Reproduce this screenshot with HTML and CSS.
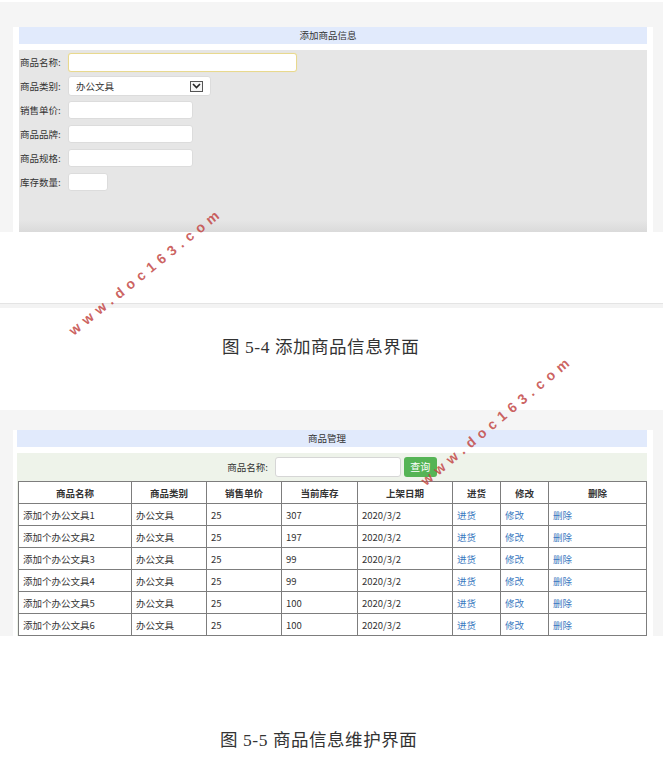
FILE: index.html
```html
<!DOCTYPE html>
<html lang="zh">
<head>
<meta charset="utf-8">
<title>商品信息</title>
<link rel="stylesheet" href="styles.css">
</head>
<body>
<section class="shot shot-add">
  <div class="panel panel-add">
    <div class="panel-title">添加商品信息</div>
    <div class="form-area">
      <div class="row"><span class="label">商品名称:</span><span class="input w-name focus"></span></div>
      <div class="row"><span class="label">商品类别:</span>
        <span class="select"><span class="select-text">办公文具</span>
          <span class="select-btn"><svg width="9" height="6" viewBox="0 0 9 6"><path d="M1 1 L4.5 4.5 L8 1" fill="none" stroke="#222" stroke-width="1.6"/></svg></span>
        </span>
      </div>
      <div class="row"><span class="label">销售单价:</span><span class="input w-mid"></span></div>
      <div class="row"><span class="label">商品品牌:</span><span class="input w-mid"></span></div>
      <div class="row"><span class="label">商品规格:</span><span class="input w-mid"></span></div>
      <div class="row"><span class="label">库存数量:</span><span class="input w-small"></span></div>
    </div>
  </div>
</section>
<div class="strip"></div>
<p class="caption cap1">图 5-4 添加商品信息界面</p>

<section class="shot shot-list">
  <div class="panel panel-list">
    <div class="panel-title">商品管理</div>
    <div class="search-area">
      <div class="search">
        <span class="search-label">商品名称:</span>
        <span class="search-input"></span>
        <span class="btn">查询</span>
      </div>
      <table class="grid">
        <colgroup>
          <col class="c1"><col class="c2"><col class="c3"><col class="c4"><col class="c5"><col class="c6"><col class="c7"><col class="c8">
        </colgroup>
        <thead>
          <tr><th>商品名称</th><th>商品类别</th><th>销售单价</th><th>当前库存</th><th>上架日期</th><th>进货</th><th>修改</th><th>删除</th></tr>
        </thead>
        <tbody>
          <tr><td>添加个办公文具1</td><td>办公文具</td><td>25</td><td>307</td><td>2020/3/2</td><td><a>进货</a></td><td><a>修改</a></td><td><a>删除</a></td></tr>
          <tr><td>添加个办公文具2</td><td>办公文具</td><td>25</td><td>197</td><td>2020/3/2</td><td><a>进货</a></td><td><a>修改</a></td><td><a>删除</a></td></tr>
          <tr><td>添加个办公文具3</td><td>办公文具</td><td>25</td><td>99</td><td>2020/3/2</td><td><a>进货</a></td><td><a>修改</a></td><td><a>删除</a></td></tr>
          <tr><td>添加个办公文具4</td><td>办公文具</td><td>25</td><td>99</td><td>2020/3/2</td><td><a>进货</a></td><td><a>修改</a></td><td><a>删除</a></td></tr>
          <tr><td>添加个办公文具5</td><td>办公文具</td><td>25</td><td>100</td><td>2020/3/2</td><td><a>进货</a></td><td><a>修改</a></td><td><a>删除</a></td></tr>
          <tr><td>添加个办公文具6</td><td>办公文具</td><td>25</td><td>100</td><td>2020/3/2</td><td><a>进货</a></td><td><a>修改</a></td><td><a>删除</a></td></tr>
        </tbody>
      </table>
    </div>
  </div>
</section>
<p class="caption cap2">图 5-5 商品信息维护界面</p>

<span class="watermark wm1">www.doc163.com</span>
<span class="watermark wm2">www.doc163.com</span>
</body>
</html>
```
FILE: styles.css
```css
* { box-sizing: border-box; }
html, body { margin: 0; padding: 0; background: #fff; }
body {
  position: relative;
  width: 663px;
  height: 762px;
  overflow: hidden;
  font-family: "Noto Sans CJK SC", "Noto Sans", sans-serif;
  color: #333;
}

.shot { background: #f5f5f5; display: flex; }
.shot-add { margin-top: 2px; height: 230px; padding: 25px 10px 0 13px; }
.shot-list { margin-top: 51px; height: 226px; padding: 20px 10px 0 13px; }

.panel { background: #fff; width: 640px; display: flex; flex-direction: column; }
.panel-add { padding: 0 6px; }
.panel-list { padding: 0 6px 0 4px; }

.panel-title {
  height: 17px;
  background: #e1eafc;
  text-align: center;
  font-size: 9.5px;
  line-height: 17px;
  color: #333;
  margin-bottom: 6px;
  padding-right: 10px;
  flex: none;
}

.form-area {
  flex: 1;
  background: linear-gradient(#e6e6e6 0, #e6e6e6 calc(100% - 12px), #dadada 100%);
  padding-left: 1px;
}
.row { height: 24px; display: flex; align-items: center; }
.label { width: 48px; font-size: 9.5px; color: #333; }
.input {
  display: block;
  height: 19px;
  background: #fff;
  border: 1px solid #dcdcdc;
  border-radius: 3px;
}
.w-name { width: 229px; }
.focus { border-color: #e8d98e; box-shadow: 0 0 1px #efe2a8; }
.w-mid { width: 125px; height: 18px; }
.w-small { width: 40px; height: 18px; }

.select {
  width: 143px;
  height: 20px;
  background: #fff;
  border: 1px solid #dcdcdc;
  border-radius: 3px;
  display: flex;
  align-items: center;
  padding-left: 7px;
  font-size: 9.5px;
}
.select-text { flex: 1; }
.select-btn {
  width: 13px;
  height: 11px;
  margin-right: 7px;
  border: 1px solid #555;
  background: #f4f4f4;
  display: flex;
  align-items: center;
  justify-content: center;
}

.strip {
  margin-top: 71px;
  height: 5px;
  background: #f3f3f3;
  border-top: 1px solid #e4e4e4;
}

.caption {
  margin: 0;
  height: 24px;
  line-height: 24px;
  font-family: "Liberation Serif", "Noto Sans CJK SC", serif;
  font-size: 17.5px;
  letter-spacing: 0.55px;
  color: #333;
  white-space: pre;
}
.cap1 { margin-top: 27px; padding-left: 222px; }
.cap2 { margin-top: 92px; padding-left: 220px; }

.search-area {
  background: #eef3ea;
  flex: none;
}
.search {
  height: 28px;
  display: flex;
  align-items: center;
  justify-content: center;
}
.search-label { font-size: 9.5px; margin-right: 7px; }
.search-input {
  width: 126px;
  height: 20px;
  background: #fff;
  border: 1px solid #d6d6d6;
  border-radius: 3px;
  margin-right: 3px;
}
.btn {
  width: 33px;
  height: 20px;
  background: #55b455;
  border-radius: 3px;
  color: #fff;
  font-size: 10px;
  line-height: 20px;
  text-align: center;
}

.grid {
  border-collapse: collapse;
  margin-left: 1px;
  width: 628px;
  table-layout: fixed;
  background: #fff;
  font-size: 9.5px;
}
.c1 { width: 113px; }
.c2 { width: 75px; }
.c3 { width: 75px; }
.c4 { width: 76px; }
.c5 { width: 95px; }
.c6 { width: 48px; }
.c7 { width: 48px; }
.c8 { width: 98px; }
.grid th, .grid td {
  border: 1px solid #7d7d7d;
  height: 22px;
  padding: 0 4px;
  white-space: nowrap;
  color: #333;
}
.grid th { font-weight: bold; text-align: center; }
.grid td { text-align: left; }
.grid a { color: #3a78c0; }

.watermark {
  position: absolute;
  font-family: "Liberation Sans", Arial, sans-serif;
  font-weight: bold;
  font-size: 14px;
  letter-spacing: 5.5px;
  color: rgba(195, 72, 70, 0.85);
  white-space: nowrap;
  transform: translate(-50%, -50%) rotate(-39deg);
}
.wm1 { left: 146px; top: 271px; }
.wm2 { left: 497px; top: 420px; transform: translate(-50%, -50%) rotate(-40deg); }
```
